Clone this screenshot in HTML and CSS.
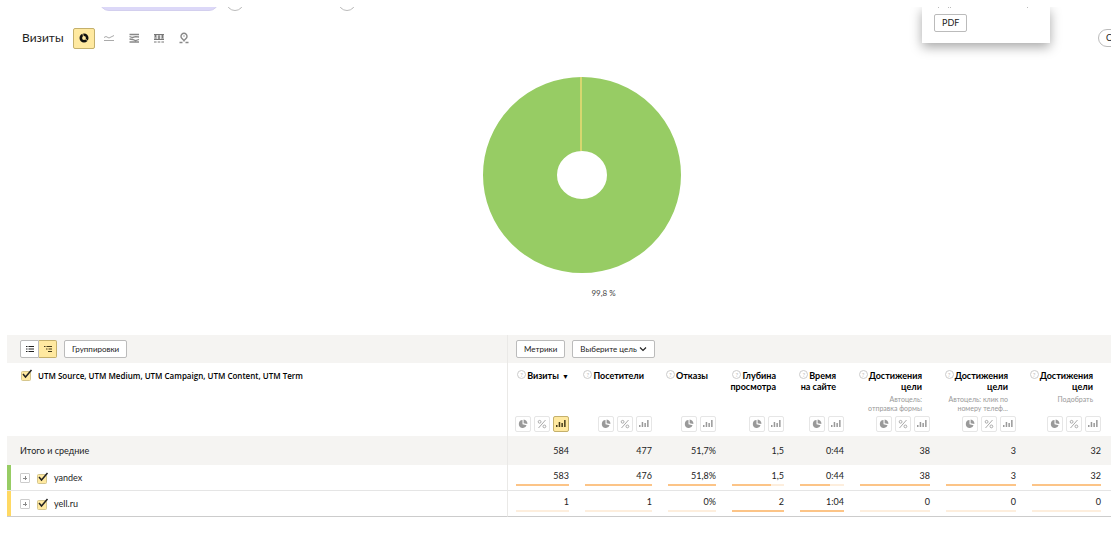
FILE: index.html
```html
<!DOCTYPE html>
<html lang="ru">
<head>
<meta charset="utf-8">
<title>Метки UTM</title>
<link rel="stylesheet" href="styles.css">
</head>
<body>
<svg class="sprite" aria-hidden="true">
  <symbol id="pie" viewBox="0 0 10 10"><path d="M4.5 1A4 4 0 1 0 8.6 6.3L4.5 5.2z"/><path d="M5.6.5A4 4 0 0 1 9.4 5L5.6 4.2z"/></symbol>
  <symbol id="percent" viewBox="0 0 10 10"><g fill="none" stroke="currentColor"><path d="M1.5 9 8.5 1"/><circle cx="2.6" cy="2.8" r="1.4"/><circle cx="7.4" cy="7.4" r="1.4"/></g></symbol>
  <symbol id="bars" viewBox="0 0 10 10"><path d="M0 6h1.500v2H0zM2.700 3h1.500v5H2.700zM5.400 4h1.500v4H5.400zM8.100 1h1.500v7H8.100z"/></symbol>
</svg>
<main class="report">
  <div class="filters">
    <span class="pill"></span><span class="round"></span><span class="round round-far"></span>
  </div>
  <section class="export">
    <svg class="export-caption" viewBox="0 0 100 2" aria-hidden="true"><path d="M4 0h1v1H4zM14 0h1v1h-1zM16 0h1v1h-1zM93 0h1v1h-1z"/></svg>
    <button class="btn" type="button">PDF</button>
  </section>
  <header class="chart-head">
    <h1>Визиты</h1>
    <div class="modes">
      <button class="mode active" type="button" aria-label="Круговая диаграмма"><svg viewBox="0 0 12 12"><circle cx="6" cy="6" r="3.200" fill="none" stroke="#111" stroke-width="2.600"/><path d="M6 6 9.800 8.800M5.800 5.500 4.500 1" stroke="#ffe9a0" stroke-width=".8"/></svg></button>
      <button class="mode" type="button" aria-label="Линии"><svg viewBox="0 0 12 12"><path d="M1 5.500 3 4.500 6 6 11 3.500M1 8.500h10" fill="none" stroke="#aaa"/></svg></button>
      <button class="mode" type="button" aria-label="Области"><svg viewBox="0 0 12 12"><path d="M1.500 2.500h9.500M1.500 4.500l3 1 3-.8 3.500.300M1.500 7l3 .500 3 1L11 7.500M1.500 10H11" fill="none" stroke="#888" stroke-width="1.300"/></svg></button>
      <button class="mode" type="button" aria-label="Столбцы"><svg viewBox="0 0 12 12"><path d="M2.500 2v5.500M6 2v5.500M9.500 2v5.500" stroke="#aaa" stroke-width="2.600"/><path d="M1 2.500h10M1 7.500h10M1 10h2.600M4.700 10h2.600M8.400 10H11M2.500 3v2M6 4v3M9.500 3v3" stroke="#777" fill="none"/></svg></button>
      <button class="mode" type="button" aria-label="Карта"><svg viewBox="0 0 12 12"><path d="M6 9.500V7.500M4 6.500a3 3 0 1 1 4 0l-2 2zM1.500 10.500h3M7.500 10.500h3" fill="none" stroke="#888" stroke-width="1.400"/><circle cx="6" cy="4" r=".7" fill="#888"/></svg></button>
    </div>
    <button class="compare" type="button">С</button>
  </header>
  <figure class="chart">
    <svg viewBox="0 0 200 196" role="img" aria-label="yandex 99,8 %">
      <ellipse cx="100" cy="98" rx="62" ry="61" fill="none" stroke="#97cc64" stroke-width="74"/>
      <path d="M99 0v74" stroke="#f3dc74" stroke-width="1.400"/>
    </svg>
    <figcaption>99,8 %</figcaption>
  </figure>
  <div class="toolbar">
    <div class="tools">
      <div class="switch">
        <button type="button" aria-label="Список"><svg viewBox="0 0 10 10"><path d="M1 2.500h1.500M3.500 2.500H9M1 5h1.500M3.500 5H9M1 7.500h1.500M3.500 7.500H9" stroke="#222"/></svg></button><button class="active" type="button" aria-label="Дерево"><svg viewBox="0 0 10 10"><path d="M1 2.500h1.500M3.500 2.500H9M3 5h1.500M5.500 5H9M5 7.500h4" stroke="#443b1a"/></svg></button>
      </div>
      <button class="btn" type="button">Группировки</button>
    </div>
    <div class="tools tools-metrics">
      <button class="btn" type="button">Метрики</button>
      <button class="btn" type="button">Выберите цель <svg class="chevron" viewBox="0 0 8 6"><path d="m1 1.500 3 3 3-3" fill="none" stroke="#222" stroke-width="1.200"/></svg></button>
    </div>
  </div>
  <table class="stats">
    <colgroup><col><col class="c-visits"><col class="c-users"><col class="c-bounce"><col class="c-depth"><col class="c-time"><col class="c-goal"><col class="c-goal"><col class="c-last"></colgroup>
    <thead>
      <tr>
        <th class="dims" scope="col"><label><input class="tick" type="checkbox" checked>UTM Source, UTM Medium, UTM Campaign, UTM Content, UTM Term</label></th>
        <th scope="col"><div class="head"><div class="title sorted"><span class="help">?</span>Визиты <span class="arrow">▼</span></div><div class="kinds"><button type="button" aria-label="Доли"><svg><use href="#pie"/></svg></button><button type="button" aria-label="Проценты"><svg><use href="#percent"/></svg></button><button class="active" type="button" aria-label="Гистограмма"><svg><use href="#bars"/></svg></button></div></div></th>
        <th scope="col"><div class="head"><div class="title"><span class="help">?</span>Посетители</div><div class="kinds"><button type="button" aria-label="Доли"><svg><use href="#pie"/></svg></button><button type="button" aria-label="Проценты"><svg><use href="#percent"/></svg></button><button type="button" aria-label="Гистограмма"><svg><use href="#bars"/></svg></button></div></div></th>
        <th scope="col"><div class="head"><div class="title"><span class="help">?</span>Отказы</div><div class="kinds"><button type="button" aria-label="Доли"><svg><use href="#pie"/></svg></button><button type="button" aria-label="Гистограмма"><svg><use href="#bars"/></svg></button></div></div></th>
        <th scope="col"><div class="head"><div class="title"><span class="help">?</span>Глубина<br>просмотра</div><div class="kinds"><button type="button" aria-label="Доли"><svg><use href="#pie"/></svg></button><button type="button" aria-label="Гистограмма"><svg><use href="#bars"/></svg></button></div></div></th>
        <th scope="col"><div class="head"><div class="title"><span class="help">?</span>Время<br>на сайте</div><div class="kinds"><button type="button" aria-label="Доли"><svg><use href="#pie"/></svg></button><button type="button" aria-label="Гистограмма"><svg><use href="#bars"/></svg></button></div></div></th>
        <th scope="col"><div class="head"><div class="title"><span class="help">?</span>Достижения<br>цели<small>Автоцель:<br>отправка формы</small></div><div class="kinds"><button type="button" aria-label="Доли"><svg><use href="#pie"/></svg></button><button type="button" aria-label="Проценты"><svg><use href="#percent"/></svg></button><button type="button" aria-label="Гистограмма"><svg><use href="#bars"/></svg></button></div></div></th>
        <th scope="col"><div class="head"><div class="title"><span class="help">?</span>Достижения<br>цели<small>Автоцель: клик по<br>номеру телеф...</small></div><div class="kinds"><button type="button" aria-label="Доли"><svg><use href="#pie"/></svg></button><button type="button" aria-label="Проценты"><svg><use href="#percent"/></svg></button><button type="button" aria-label="Гистограмма"><svg><use href="#bars"/></svg></button></div></div></th>
        <th scope="col"><div class="head"><div class="title"><span class="help">?</span>Достижения<br>цели<small>Подобрать</small></div><div class="kinds"><button type="button" aria-label="Доли"><svg><use href="#pie"/></svg></button><button type="button" aria-label="Проценты"><svg><use href="#percent"/></svg></button><button type="button" aria-label="Гистограмма"><svg><use href="#bars"/></svg></button></div></div></th>
      </tr>
    </thead>
    <tbody>
      <tr class="total"><th scope="row">Итого и средние</th><td>584</td><td>477</td><td>51,7%</td><td>1,5</td><td>0:44</td><td>38</td><td>3</td><td>32</td></tr>
      <tr class="row green"><th scope="row"><div class="name"><button class="plus" type="button" aria-label="Развернуть"></button><label><input class="tick" type="checkbox" checked>yandex</label></div></th>
        <td>583<div class="bar"><i style="width:100%"></i></div></td><td>476<div class="bar"><i style="width:100%"></i></div></td><td>51,8%<div class="bar"><i style="width:100%"></i></div></td><td>1,5<div class="bar"><i style="width:75%"></i></div></td><td>0:44<div class="bar"><i style="width:69%"></i></div></td><td>38<div class="bar"><i style="width:100%"></i></div></td><td>3<div class="bar"><i style="width:100%"></i></div></td><td>32<div class="bar"><i style="width:100%"></i></div></td></tr>
      <tr class="row yellow"><th scope="row"><div class="name"><button class="plus" type="button" aria-label="Развернуть"></button><label><input class="tick" type="checkbox" checked>yell.ru</label></div></th>
        <td>1<div class="bar"></div></td><td>1<div class="bar"></div></td><td>0%<div class="bar"></div></td><td>2<div class="bar"><i style="width:100%"></i></div></td><td>1:04<div class="bar"><i style="width:100%"></i></div></td><td>0<div class="bar"></div></td><td>0<div class="bar"></div></td><td>0<div class="bar"></div></td></tr>
    </tbody>
  </table>
</main>
</body>
</html>
```
FILE: styles.css
```css
* { box-sizing: border-box; }
body { margin: 7px 6px 0 7px; background: #fff; color: #222; font: 9px/12px Lato, Roboto, sans-serif; }
button { font: inherit; color: inherit; padding: 0; margin: 0; background: #fff; border: 1px solid #ccc; }
svg { display: block; }
.sprite { position: absolute; width: 0; height: 0; }
.report { position: relative; overflow: hidden; }

.filters { display: flex; align-items: flex-end; height: 4px; padding-left: 92px; overflow: hidden; }
.pill { flex: none; width: 120px; height: 20px; border: 1px solid #d3cfee; border-radius: 10px; background: #dcd8f8; }
.round { flex: none; width: 18px; height: 18px; margin-left: 7px; border: 1px solid #bbb; border-radius: 50%; }
.round-far { margin-left: 94px; }

.export { position: absolute; top: 0; right: 61px; width: 128px; height: 36px; padding: 0 12px; background: #fff; box-shadow: 0 4px 12px rgba(0, 0, 0, .35); }
.export-caption { width: 100px; height: 2px; margin-bottom: 5px; fill: #bbb; }
.btn { height: 18px; padding: 0 7px; border: 1px solid #bbb; border-radius: 2px; font-size: 8px; line-height: 16px; white-space: nowrap; }
.export .btn { font-size: 9px; }

.chart-head { display: flex; align-items: center; height: 22px; margin-top: 16px; padding-left: 15px; }
h1 { margin: 0; width: 51px; font-size: 12px; font-weight: 400; line-height: 16px; }
.modes { display: flex; flex: 1; gap: 3px; }
.mode { display: grid; place-items: center; width: 22px; height: 21px; border: 1px solid transparent; border-radius: 2px; }
.mode svg { width: 12px; height: 12px; }
.active { border-color: #c4b06c; background: #ffe9a0; }
.compare { width: 30px; height: 18px; margin-right: -17px; padding-left: 7px; border-radius: 9px; border-color: #bbb; text-align: left; }

.chart { display: flex; flex-direction: column; align-items: center; height: 286px; margin: 0; padding: 28px 0 0 45px; }
.chart svg { width: 200px; height: 196px; }
.chart figcaption { margin-top: 14px; padding-left: 44px; font-size: 8px; color: #444; }

.toolbar { display: grid; grid-template-columns: 1fr 603px; height: 28px; background: #f5f4f2; }
.tools { display: flex; align-items: center; gap: 7px; padding-left: 13px; border-right: 1px solid #eae9e7; }
.tools-metrics { padding-left: 8px; border-right: 0; }
.switch { display: flex; }
.switch button { display: grid; place-items: center; width: 19px; height: 18px; border-color: #bbb; border-radius: 2px 0 0 2px; }
.switch .active { width: 18px; border-color: #c4b06c; border-left: 0; border-radius: 0 2px 2px 0; background: #ffe9a0; }
.switch svg { width: 10px; height: 10px; }
.chevron { display: inline-block; width: 8px; height: 6px; }

.stats { width: 100%; table-layout: fixed; border-collapse: separate; border-spacing: 0; }
.c-visits { width: 69px; }
.c-users { width: 83px; }
.c-bounce { width: 64px; }
.c-depth { width: 68px; }
.c-time { width: 60px; }
.c-goal { width: 86px; }
.c-last { width: 87px; }
.stats th, .stats td { padding: 0 8px; text-align: right; font-weight: 400; }
.stats th:last-child, .stats td:last-child { padding-right: 10px; }
.stats th:first-child { padding: 0; text-align: left; border-right: 1px solid #eae9e7; }
.stats thead th { height: 73px; vertical-align: top; color: #000; font-weight: 700; line-height: 11px; }
.stats thead .dims { padding: 6px 0 0 13px; font-family: "Open Sans", sans-serif; font-size: 8px; font-weight: 600; }
.stats label { display: flex; align-items: center; }
.tick { flex: none; appearance: none; width: 13px; height: 13px; margin: 0 5px 0 0; background: url("data:image/svg+xml,%3Csvg xmlns='http://www.w3.org/2000/svg' viewBox='0 0 13 13'%3E%3Crect x='1.5' y='2.500' width='9' height='9' rx='1' fill='%23ffe9a0' stroke='%23d5c68e'/%3E%3Cpath d='m3 5 2.500 3L11.500 1' fill='none' stroke='%23222' stroke-width='1.500'/%3E%3C/svg%3E"); }
.head { display: flex; flex-direction: column; justify-content: space-between; align-items: flex-end; height: 73px; padding: 7px 0 4px; }
.title { padding-right: 8px; white-space: nowrap; }
.title.sorted { padding-right: 0; }
.arrow { padding-left: 1px; font-size: 7px; }
.title small { display: block; margin-top: 3px; color: #999; font-size: 7px; font-weight: 400; line-height: 9px; }
.help { display: inline-block; width: 9px; height: 9px; margin-right: 1px; border: 1px solid #ccc; border-radius: 50%; color: #bbb; font-size: 6px; font-weight: 400; line-height: 7px; text-align: center; vertical-align: top; }
.kinds { display: flex; gap: 3px; }
.kinds button { display: grid; place-items: center; width: 16px; height: 16px; border-color: #e6e6e6; color: #aaa; fill: #999; border-radius: 2px; }
.kinds svg { width: 10px; height: 10px; }
.kinds .active { border-color: #c4b06c; fill: #443b1a; }

.stats .total th, .stats .total td { height: 29px; background: #f5f4f2; }
.stats .total th { padding-left: 13px; }
.row th, .row td { height: 26px; border-bottom: 1px solid #e5e5e5; }
.yellow th, .yellow td { border-bottom-color: #ccc; }
.row td { vertical-align: bottom; }
.green { --mark: #97cc64; }
.yellow { --mark: #ffd963; }
.name { display: flex; align-items: center; gap: 6px; height: 25px; padding: 1px 0 0 9px; border-left: 4px solid var(--mark); }
.plus { width: 10px; height: 10px; border-radius: 1px; background: linear-gradient(#888, #888) center / 4px 1px no-repeat, linear-gradient(#888, #888) center / 1px 4px no-repeat, #fff; }
.bar { height: 2px; margin: 2px 0 4px; background: #fdeedd; }
.bar i { display: block; height: 2px; background: #fcc487; }
```
